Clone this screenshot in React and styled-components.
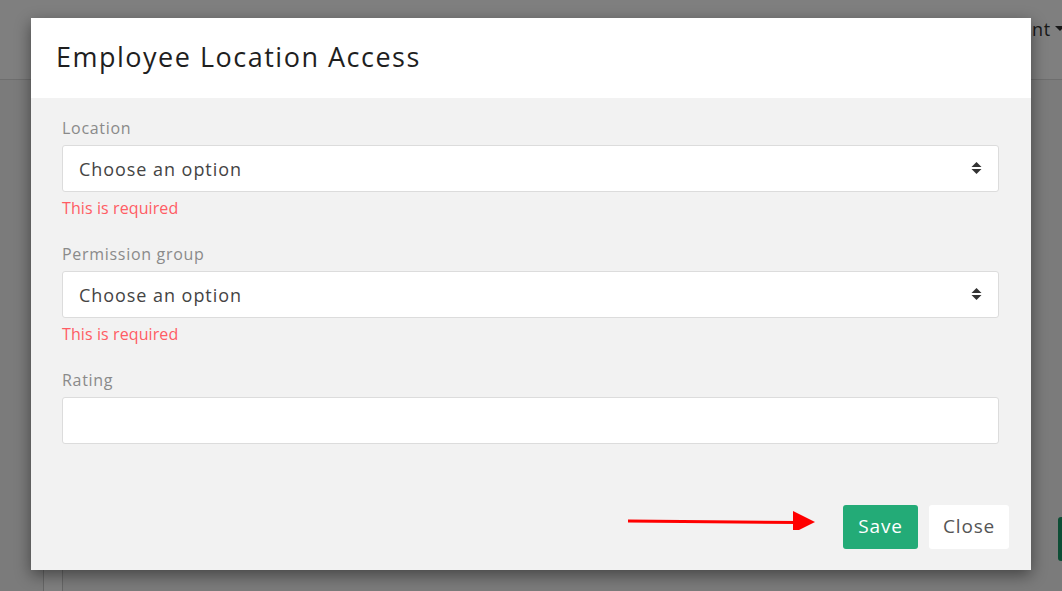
import React from "react";
import styled, { createGlobalStyle } from "styled-components";

const GlobalStyle = createGlobalStyle`
  html, body {
    margin: 0;
    padding: 0;
    height: 100%;
    overflow: hidden;
  }
  body {
    font-family: "Open Sans", "Noto Sans", sans-serif;
    background: #fafafa;
  }
`

const Page = styled.div`
  position: relative;
  width: 100%;
  height: 591px;
  display: flex;
  flex-direction: column;
  background: #f7f7f7;
`

const TopBar = styled.div`
  height: 80px;
  flex-shrink: 0;
  background: #fff;
  border-bottom: 1px solid #ddd;
  display: flex;
  justify-content: flex-end;
  align-items: center;
  box-sizing: border-box;
`

const AccountMenu = styled.div`
  display: flex;
  align-items: center;
  gap: 4px;
  font-size: 18px;
  color: #333;
  margin-top: -22px;
  margin-right: -3px;
  white-space: nowrap;
  letter-spacing: 0.8px;
`

const Caret = styled.span`
  width: 0;
  height: 0;
  border-left: 5px solid transparent;
  border-right: 5px solid transparent;
  border-top: 5px solid #333;
`

const Content = styled.div`
  flex: 1;
  display: flex;
  padding-left: 43px;
`

const SidePanel = styled.div`
  width: 18px;
  border-left: 1px solid #ccc;
  border-right: 1px solid #ccc;
  background: #fff;
`

const Main = styled.div`
  flex: 1;
  display: flex;
  justify-content: flex-end;
  padding-top: 437px;
`

const PageButton = styled.div`
  width: 8px;
  height: 44px;
  margin-right: -4px;
  background: #1a9a6a;
  border-radius: 3px;
`

const Overlay = styled.div`
  position: absolute;
  inset: 0;
  background: rgba(0, 0, 0, 0.5);
  display: flex;
  justify-content: center;
  align-items: flex-start;
  padding-top: 18px;
`

const Modal = styled.div`
  position: relative;
  width: 1000px;
  height: 552px;
  background: #f2f2f2;
  box-shadow: 0 5px 15px rgba(0, 0, 0, 0.45);
  display: flex;
  flex-direction: column;
`

const ModalHeader = styled.div`
  height: 80px;
  flex-shrink: 0;
  background: #fff;
  display: flex;
  align-items: center;
  padding: 0 0 4px 25px;
  box-sizing: border-box;
`

const Title = styled.h2`
  margin: 0;
  font-size: 27px;
  font-weight: 400;
  color: #1f1f1f;
  letter-spacing: 1.5px;
`

const ModalBody = styled.div`
  flex: 1;
  padding: 20px 32px 0 31px;
  display: flex;
  flex-direction: column;
`

const Field = styled.div`
  display: flex;
  flex-direction: column;
  margin-bottom: 26px;
`

const Label = styled.label`
  font-size: 16px;
  line-height: 20px;
  color: #8a8a8a;
  margin-bottom: 7px;
  letter-spacing: 0.7px;
`

const SelectBox = styled.div`
  height: 47px;
  background: #fff;
  border: 1px solid #dcdcdc;
  border-radius: 3px;
  box-sizing: border-box;
  display: flex;
  align-items: center;
  justify-content: space-between;
  padding: 0 16px;
  font-size: 18px;
  color: #444;
  letter-spacing: 0.95px;
`

const ErrorText = styled.div`
  font-size: 16px;
  line-height: 20px;
  color: #ff5c64;
  margin-top: 6px;
  letter-spacing: 0.1px;
`

const Footer = styled.div`
  display: flex;
  justify-content: flex-end;
  gap: 11px;
  padding: 0 22px 21px 0;
`

const Button = styled.button`
  height: 44px;
  border: none;
  border-radius: 3px;
  font-family: inherit;
  font-size: 19px;
  letter-spacing: 0.8px;
  padding: 0 14px 2px;
  cursor: pointer;
  background: ${p => (p.primary ? "#23ab77" : "#fff")};
  color: ${p => (p.primary ? "#fff" : "#555")};
  min-width: ${p => (p.primary ? "75px" : "80px")};
`

const Arrow = styled.svg`
  position: absolute;
  left: 597px;
  top: 472px;
`

function SortIcon() {
  return (
    <svg width="11" height="13" viewBox="0 0 11 13">
      <path d="M5.5 0 L10.5 5 L0.5 5 Z" fill="#333" />
      <path d="M5.5 12 L10.5 7 L0.5 7 Z" fill="#333" />
    </svg>
  )
}

function Select({ label, error }) {
  return (
    <Field>
      <Label>{label}</Label>
      <SelectBox>
        <span>Choose an option</span>
        <SortIcon />
      </SelectBox>
      {error && <ErrorText>{error}</ErrorText>}
    </Field>
  )
}

export default function App() {
  return (
    <>
      <GlobalStyle />
      <Page>
        <TopBar>
          <AccountMenu>
            <span>Account</span>
            <Caret />
          </AccountMenu>
        </TopBar>
        <Content>
          <SidePanel />
          <Main>
            <PageButton />
          </Main>
        </Content>

        <Overlay>
          <Modal>
            <ModalHeader>
              <Title>Employee Location Access</Title>
            </ModalHeader>
            <ModalBody>
              <Select label="Location" error="This is required" />
              <Select label="Permission group" error="This is required" />
              <Field>
                <Label>Rating</Label>
                <SelectBox />
              </Field>
            </ModalBody>
            <Footer>
              <Button primary>Save</Button>
              <Button>Close</Button>
            </Footer>
            <Arrow width="190" height="40" viewBox="0 0 190 40">
              <line x1="0" y1="31" x2="170" y2="32.5" stroke="#f00" strokeWidth="3" />
              <path d="M165 21 L187 32 L165 43 Z" fill="#f00" />
            </Arrow>
          </Modal>
        </Overlay>
      </Page>
    </>
  )
}
